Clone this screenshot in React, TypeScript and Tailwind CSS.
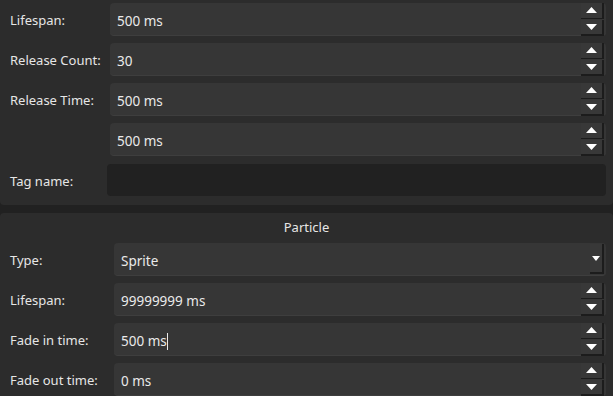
import React from 'react';

const font = { fontFamily: '"Noto Sans", "Open Sans", sans-serif' };

function Arrow({ up }: { up?: boolean }) {
  return (
    <svg width="11" height="6" viewBox="0 0 11 6" className="block">
      {up ? <polygon points="0,6 5.5,0 11,6" fill="#fff" /> : <polygon points="0,0 5.5,6 11,0" fill="#fff" />}
    </svg>
  );
}

function SpinBox({ value, caret }: { value: string; caret?: boolean }) {
  return (
    <div className="flex h-[33px] flex-1 items-center rounded-[4px] bg-[#363636] pl-[7px] pr-[2px] border-b border-[#3e3e3e]">
      <span className="flex-1 pt-[4px] text-[13.5px] text-[#eaeaea]">
        {value}
        {caret && <span className="inline-block w-px h-[17px] bg-[#eaeaea] align-middle -mt-[2px]" />}
      </span>
      <div className="flex flex-col gap-px">
        <button className="flex h-[16px] w-[23px] items-center justify-center bg-[#383838] border-r-2 border-b border-[#1c1c1c]">
          <Arrow up />
        </button>
        <button className="flex h-[16px] w-[23px] items-center justify-center bg-[#383838] border-r-2 border-b-2 border-[#1c1c1c]">
          <Arrow />
        </button>
      </div>
    </div>
  );
}

function Row({ label, children, labelW }: { label: string; children: React.ReactNode; labelW: string }) {
  return (
    <div className="flex items-center h-[33px]">
      <div className={`${labelW} shrink-0 pl-[10px] pt-[3px] text-[13px] text-[#e6e6e6]`}>{label}</div>
      {children}
    </div>
  );
}

export default function App() {
  return (
    <div className="w-[613px] h-[396px] overflow-hidden bg-[#212121]" style={font}>
      {/* Emitter section */}
      <div className="h-[205px] rounded-b-[4px] bg-[#2c2c2c] pt-[3px] pr-[7px] flex flex-col gap-[7px]">
        <Row label="Lifespan:" labelW="w-[110px]">
          <SpinBox value="500 ms" />
        </Row>
        <Row label="Release Count:" labelW="w-[110px]">
          <SpinBox value="30" />
        </Row>
        <Row label="Release Time:" labelW="w-[110px]">
          <SpinBox value="500 ms" />
        </Row>
        <Row label="" labelW="w-[110px]">
          <SpinBox value="500 ms" />
        </Row>
        <div className="flex items-center h-[32px] mt-[1px]">
          <div className="w-[107px] shrink-0 pl-[10px] pt-[3px] text-[13px] text-[#e6e6e6]">Tag name:</div>
          <div className="flex-1 h-full rounded-[4px] bg-[#212121]" />
        </div>
      </div>

      {/* Particle section */}
      <div className="mt-[8px] rounded-t-[4px] bg-[#2c2c2c] pr-[7px]">
        <div className="h-[30px] flex items-center justify-center text-[13px] text-[#e6e6e6] pl-[7px]">Particle</div>
        <div className="flex flex-col gap-[7px]">
          <Row label="Type:" labelW="w-[114px]">
            <div className="flex h-[33px] flex-1 items-center rounded-[4px] bg-[#363636] pl-[7px] pr-[2px] border-b border-[#3e3e3e]">
              <span className="flex-1 pt-[4px] text-[13.5px] text-[#eaeaea]">Sprite</span>
              <button className="flex h-[30px] w-[14px] items-center justify-center bg-[#383838] border-r-2 border-b-2 border-[#1c1c1c]">
                <svg width="8" height="5" viewBox="0 0 8 5" className="block">
                  <polygon points="0,0 4,5 8,0" fill="#fff" />
                </svg>
              </button>
            </div>
          </Row>
          <Row label="Lifespan:" labelW="w-[114px]">
            <SpinBox value="99999999 ms" />
          </Row>
          <Row label="Fade in time:" labelW="w-[114px]">
            <SpinBox value="500 ms" caret />
          </Row>
          <Row label="Fade out time:" labelW="w-[114px]">
            <SpinBox value="0 ms" />
          </Row>
        </div>
      </div>
    </div>
  );
}
